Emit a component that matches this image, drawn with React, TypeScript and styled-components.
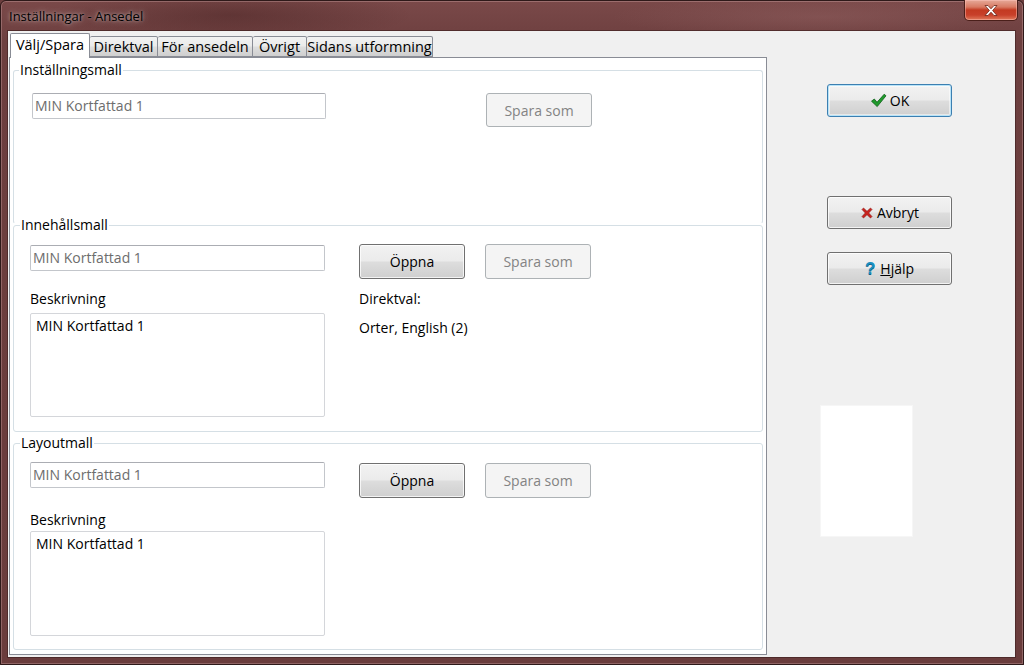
import React from "react";
import styled, { createGlobalStyle } from "styled-components";

const UI_FONT = `"Open Sans", "Noto Sans", "Liberation Sans", sans-serif`;

const GlobalStyle = createGlobalStyle`
  html, body {
    margin: 0;
    padding: 0;
    background: #6b3d3d;
  }
  body {
    font-family: ${UI_FONT};
    font-size: 14px;
    color: #000;
  }
  * { box-sizing: border-box; }
`;

// Aero window frame, dark red glass
const Window = styled.div`
  width: 1024px;
  height: 665px;
  display: flex;
  flex-direction: column;
  border: 1px solid #2e1919;
  border-radius: 6px 6px 0 0;
  padding: 0 8px 7px 7px;
  background:
    radial-gradient(ellipse 260px 40px at 230px 14px, rgba(40, 10, 10, 0.28), transparent 70%),
    radial-gradient(ellipse 300px 30px at 820px 16px, rgba(170, 120, 120, 0.25), transparent 70%),
    linear-gradient(180deg, #7a4949 0%, #6d3f3f 40px, #6a3c3c 100%);
  box-shadow: inset 0 0 0 1px rgba(255, 220, 220, 0.25);
`;

const TitleBar = styled.div`
  height: 30px;
  display: flex;
  justify-content: space-between;
  align-items: flex-start;
`;

const Title = styled.div`
  margin-top: 7px;
  margin-left: 1px;
  font-size: 13px;
  line-height: 17px;
  color: #000;
  text-shadow: 0 0 7px rgba(255, 255, 255, 0.5), 0 0 3px rgba(255, 255, 255, 0.45);
`;

const CloseButton = styled.div`
  width: 54px;
  height: 21px;
  margin-top: -1px;
  margin-right: -3px;
  display: flex;
  align-items: center;
  justify-content: center;
  border: 1px solid #4a1f1a;
  border-top: none;
  border-radius: 0 0 5px 5px;
  background: linear-gradient(180deg, #e6a999 0%, #d87a63 35%, #c33a22 50%, #c8402a 75%, #e07a5c 100%);
  box-shadow: inset 0 0 0 1px rgba(255, 200, 190, 0.45);
`;

const Client = styled.div`
  flex: 1;
  display: flex;
  background: #f0f0f0;
  box-shadow: 0 0 0 1px rgba(60, 30, 30, 0.6);
`;

const TabArea = styled.div`
  width: 759px;
  display: flex;
  flex-direction: column;
  padding: 2px 0 2px 1px;
`;

const TabStrip = styled.div`
  height: 24px;
  display: flex;
  align-items: flex-end;
  padding-left: 1px;
`;

const Tab = styled.div<{ $active?: boolean; $w: number }>`
  position: relative;
  width: ${(p) => p.$w}px;
  height: ${(p) => (p.$active ? "25px" : "21px")};
  margin-bottom: ${(p) => (p.$active ? "-1px" : "0")};
  z-index: ${(p) => (p.$active ? 1 : 0)};
  padding-top: ${(p) => (p.$active ? "1px" : "0")};
  border: 1px solid #898c95;
  border-bottom: ${(p) => (p.$active ? "none" : "1px solid #898c95")};
  border-left-width: ${(p) => (p.$active ? "1px" : "0")};
  border-radius: 2px 2px 0 0;
  font-size: 14.5px;
  line-height: 19px;
  text-align: center;
  white-space: nowrap;
  background: ${(p) =>
    p.$active
      ? "#fff"
      : "linear-gradient(180deg, #f2f2f2 0%, #ebebeb 45%, #dddddd 55%, #cfcfcf 100%)"};
`;

const Panel = styled.div`
  flex: 1;
  display: flex;
  flex-direction: column;
  gap: 2px;
  padding-top: 3px;
  background: #fff;
  border: 1px solid #898c95;
`;

// $open: the bottom edge is hidden under the next group's caption
const Group = styled.fieldset<{ $open?: boolean }>`
  margin: 0 3px ${(p) => (p.$open ? "-10px" : "0")};
  padding: 0;
  min-width: 0;
  border: 1px solid #d5dfe5;
  border-bottom-color: ${(p) => (p.$open ? "transparent" : "#d5dfe5")};
  border-radius: 3px;
`;

const Legend = styled.legend<{ $indent?: number }>`
  margin-left: ${(p) => p.$indent ?? 6}px;
  padding: 0 1px;
  font-size: 14px;
  line-height: 18px;
`;

const GroupBody = styled.div<{ $pt: number; $pb: number; $pl: number }>`
  display: flex;
  align-items: flex-start;
  padding: ${(p) => `${p.$pt}px 0 ${p.$pb}px ${p.$pl}px`};
`;

const Column = styled.div<{ $width?: number; $ml?: number }>`
  display: flex;
  flex-direction: column;
  width: ${(p) => (p.$width ? `${p.$width}px` : "auto")};
  margin-left: ${(p) => p.$ml ?? 0}px;
`;

const Field = styled.div<{ $mt?: number; $width?: number }>`
  width: ${(p) => p.$width ?? 295}px;
  height: 26px;
  margin-top: ${(p) => p.$mt ?? 0}px;
  padding: 0 2px;
  border: 1px solid #c3c6cb;
  border-top-color: #abadb3;
  border-radius: 2px;
  color: #6d6d6d;
  font-size: 14px;
  line-height: 23px;
  background: #fff;
`;

const Label = styled.div<{ $mt: number }>`
  margin-top: ${(p) => p.$mt}px;
  font-size: 14px;
  line-height: 18px;
`;

const TextBox = styled.div<{ $mt: number; $h: number }>`
  width: 295px;
  height: ${(p) => p.$h}px;
  margin-top: ${(p) => p.$mt}px;
  padding: 2px 5px;
  border: 1px solid #d4d6da;
  border-radius: 2px;
  font-size: 14px;
  line-height: 19px;
  background: #fff;
`;

const ButtonRow = styled.div<{ $mt?: number; $gap?: number }>`
  display: flex;
  gap: ${(p) => p.$gap ?? 20}px;
  margin-top: ${(p) => p.$mt ?? 0}px;
`;

type Variant = "normal" | "disabled" | "default";

const Button = styled.div<{ $variant?: Variant; $w?: number; $h?: number; $ml?: number; $mt?: number }>`
  width: ${(p) => p.$w ?? 106}px;
  height: ${(p) => p.$h ?? 35}px;
  margin-left: ${(p) => p.$ml ?? 0}px;
  margin-top: ${(p) => p.$mt ?? 0}px;
  display: flex;
  align-items: center;
  justify-content: center;
  gap: 3px;
  font-family: ${UI_FONT};
  font-size: 14px;
  border-radius: 3px;
  border: 1px solid
    ${(p) => (p.$variant === "disabled" ? "#adb2b5" : p.$variant === "default" ? "#3c7fb1" : "#707070")};
  color: ${(p) => (p.$variant === "disabled" ? "#838383" : "#000")};
  background: ${(p) =>
    p.$variant === "disabled"
      ? "#f4f4f4"
      : "linear-gradient(180deg, #f2f2f2 0%, #ebebeb 48%, #dddddd 52%, #cfcfcf 100%)"};
  box-shadow: ${(p) =>
    p.$variant === "default"
      ? "inset 0 0 0 1px #b7e3f8, inset 0 0 0 2px rgba(255,255,255,0.5)"
      : p.$variant === "disabled"
      ? "none"
      : "inset 0 0 0 1px rgba(255,255,255,0.75)"};
`;

const SidePane = styled.div`
  flex: 1;
  display: flex;
  flex-direction: column;
  padding-left: 60px;
`;

const Preview = styled.div`
  width: 93px;
  height: 132px;
  margin-top: 120px;
  margin-left: -7px;
  background: #fff;
  border: 1px solid #f6f6f6;
`;

const Help = styled.span`
  font-family: "Liberation Sans", sans-serif;
  font-weight: bold;
  font-size: 17px;
  color: #1b8fc0;
  text-shadow: 0 1px 0 #0b5f86;
  margin-right: 2px;
`;

const CheckIcon = () => (
  <svg width="17" height="15" viewBox="0 0 17 15">
    <path
      d="M1.5 8.2 L4.3 6 L7 9.3 L14.2 1.2 L16 2.8 L7.2 13.6 Z"
      fill="#1f9a2c"
      stroke="#0d5e16"
      strokeWidth="0.8"
      strokeLinejoin="round"
    />
  </svg>
);

const CrossIcon = () => (
  <svg width="14" height="14" viewBox="0 0 14 14">
    <path
      d="M2 3.5 L3.5 2 L7 5.3 L10.5 2 L12 3.5 L8.7 7 L12 10.5 L10.5 12 L7 8.7 L3.5 12 L2 10.5 L5.3 7 Z"
      fill="#c8231e"
      stroke="#8d1410"
      strokeWidth="0.6"
      strokeLinejoin="round"
    />
  </svg>
);

const CloseGlyph = () => (
  <svg width="16" height="13" viewBox="0 0 16 13">
    <path
      d="M2 1.5 L5 1.5 L8 4.8 L11 1.5 L14 1.5 L9.6 6.5 L14 11.5 L11 11.5 L8 8.2 L5 11.5 L2 11.5 L6.4 6.5 Z"
      fill="#fff"
      stroke="#6a2318"
      strokeWidth="0.8"
      strokeLinejoin="round"
    />
  </svg>
);

const TEMPLATE = "MIN Kortfattad 1";

const TABS = [
  { label: "Välj/Spara", w: 80 },
  { label: "Direktval", w: 68 },
  { label: "För ansedeln", w: 95 },
  { label: "Övrigt", w: 54 },
  { label: "Sidans utformning", w: 126 },
];

export default function App() {
  return (
    <>
      <GlobalStyle />
      <Window>
        <TitleBar>
          <Title>Inställningar - Ansedel</Title>
          <CloseButton>
            <CloseGlyph />
          </CloseButton>
        </TitleBar>

        <Client>
          <TabArea>
            <TabStrip>
              {TABS.map((t, i) => (
                <Tab key={t.label} $active={i === 0} $w={t.w}>
                  {t.label}
                </Tab>
              ))}
            </TabStrip>

            <Panel>
              {/* Inställningsmall */}
              <Group $open>
                <Legend $indent={5}>Inställningsmall</Legend>
                <GroupBody $pt={14} $pb={96} $pl={18}>
                  <Field $width={294}>{TEMPLATE}</Field>
                  <Button $variant="disabled" $w={106} $h={34} $ml={160}>
                    Spara som
                  </Button>
                </GroupBody>
              </Group>

              {/* Innehållsmall */}
              <Group>
                <Legend>Innehållsmall</Legend>
                <GroupBody $pt={10} $pb={14} $pl={16}>
                  <Column $width={295}>
                    <Field $mt={1}>{TEMPLATE}</Field>
                    <Label $mt={19}>Beskrivning</Label>
                    <TextBox $mt={5} $h={104}>{TEMPLATE}</TextBox>
                  </Column>
                  <Column $ml={34}>
                    <ButtonRow>
                      <Button>Öppna</Button>
                      <Button $variant="disabled">Spara som</Button>
                    </ButtonRow>
                    <Label $mt={11}>Direktval:</Label>
                    <Label $mt={11}>Orter, English (2)</Label>
                  </Column>
                </GroupBody>
              </Group>

              {/* Layoutmall */}
              <Group>
                <Legend>Layoutmall</Legend>
                <GroupBody $pt={10} $pb={13} $pl={16}>
                  <Column $width={295}>
                    <Field>{TEMPLATE}</Field>
                    <Label $mt={23}>Beskrivning</Label>
                    <TextBox $mt={2} $h={105}>{TEMPLATE}</TextBox>
                  </Column>
                  <Column $ml={34}>
                    <ButtonRow $mt={1}>
                      <Button>Öppna</Button>
                      <Button $variant="disabled">Spara som</Button>
                    </ButtonRow>
                  </Column>
                </GroupBody>
              </Group>
            </Panel>
          </TabArea>

          <SidePane>
            <Button $variant="default" $w={125} $h={33} $mt={53}>
              <CheckIcon />
              OK
            </Button>
            <Button $w={125} $h={33} $mt={79}>
              <CrossIcon />
              Avbryt
            </Button>
            <Button $w={125} $h={33} $mt={23}>
              <Help>?</Help>
              <span>
                <u>H</u>jälp
              </span>
            </Button>
            <Preview />
          </SidePane>
        </Client>
      </Window>
    </>
  );
}
